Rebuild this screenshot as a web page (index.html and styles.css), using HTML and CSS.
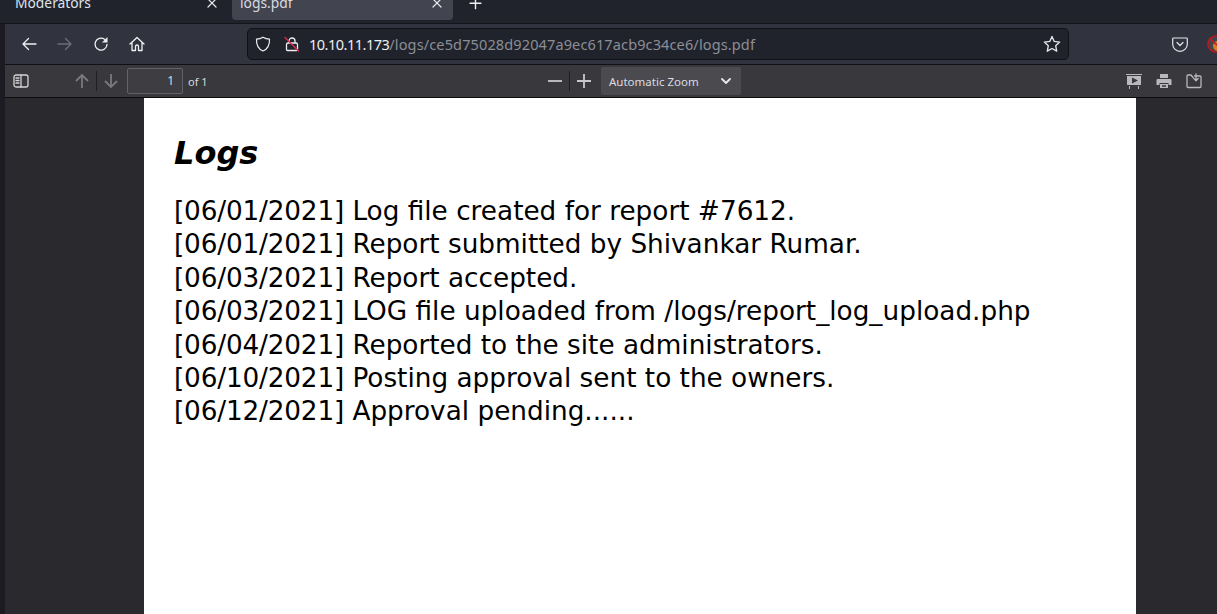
FILE: index.html
```html
<!DOCTYPE html>
<html lang="en">
<head>
<meta charset="utf-8">
<title>logs.pdf</title>
<link rel="stylesheet" href="styles.css">
</head>
<body>
<div class="window">
  <div class="tabbar">
    <div class="tab">
      <span class="tab-title">Moderators</span>
      <svg class="tab-close" viewBox="0 0 10 10"><path d="M1 -1L9 7M9 -1L1 7"/></svg>
    </div>
    <div class="tab active">
      <span class="tab-title">logs.pdf</span>
      <svg class="tab-close" viewBox="0 0 10 10"><path d="M1 -1L9 7M9 -1L1 7"/></svg>
    </div>
    <svg class="newtab" viewBox="0 0 12 12"><path d="M6 -2V8M1 3H11"/></svg>
  </div>
  <div class="navbar">
    <div class="navbtns">
      <svg class="ic" viewBox="0 0 16 16"><path d="M15 8H2M7.500 2.500L2 8l5.500 5.500"/></svg>
      <svg class="ic dim" viewBox="0 0 16 16"><path d="M1 8h13M8.500 2.500L14 8l-5.500 5.500"/></svg>
      <svg class="ic" viewBox="0 0 16 16"><path d="M14 8.500A6 6 0 1 1 11.500 3.300"/><path class="fill" d="M14.500 1v5.500H9z"/></svg>
      <svg class="ic" viewBox="0 0 16 16"><path d="M1 8L8 1.500 15 8M3 6.500V14.500H6.500V10.500a1.500 1.500 0 0 1 3 0V14.500H13V6.500"/></svg>
    </div>
    <div class="urlbar">
      <svg class="shield" viewBox="0 0 16 16"><path d="M8 1.200C10 2.400 12 3 14.500 3.200C14.800 9 12.500 13 8 15C3.500 13 1.200 9 1.500 3.200C4 3 6 2.400 8 1.200Z"/></svg>
      <svg class="lock" viewBox="0 0 16 16"><path d="M5 7V5a3 3 0 0 1 6 0v2M2.500 8.500a1.500 1.500 0 0 1 1.500-1.500h8a1.500 1.500 0 0 1 1.500 1.500v5a1 1 0 0 1-1 1h-9a1 1 0 0 1-1-1z"/><path class="strike" d="M1 1.500L14.500 15"/></svg>
      <div class="url"><span class="host">10.10.11.173</span><span class="path">/logs/ce5d75028d92047a9ec617acb9c34ce6/logs.pdf</span></div>
      <svg class="star" viewBox="0 0 16 16"><path d="M8 1.300l2 4.400 4.800.6-3.500 3.300.9 4.800L8 12l-4.200 2.400.9-4.800L1.200 6.300 6 5.700z"/></svg>
    </div>
    <div class="navright">
      <svg class="pocket" viewBox="0 0 16 16"><path d="M1.500 2h13a.8.8 0 0 1 .8.8V8a7.300 7.300 0 0 1-14.600 0V2.800a.8.8 0 0 1 .8-.8zM5 6.500L8 9.500l3-3"/></svg>
      <svg class="ext" viewBox="0 0 18 18"><circle cx="9" cy="9" r="8" class="ext-ring"/><circle cx="11" cy="11" r="5" class="ext-core"/><path class="ext-slash" d="M3 3.500L15 14.500"/></svg>
    </div>
  </div>
  <div class="pdfbar">
    <div class="pdf-left">
      <svg class="tool sidebar" viewBox="0 0 16 16"><rect x="1" y="2" width="14" height="12" rx="2"/><path d="M8 2v12M3 5h3M3 7.500h3M3 10h3"/></svg>
      <div class="pager">
        <svg class="tool dim2" viewBox="0 0 16 16"><path class="thick" d="M8 15V2M2 8l6-6 6 6"/></svg>
        <span class="sep"></span>
        <svg class="tool dim2" viewBox="0 0 16 16"><path class="thick" d="M8 1v13M2 8l6 6 6-6"/></svg>
      </div>
      <div class="pageinput">1</div>
      <span class="pagecount">of 1</span>
    </div>
    <div class="pdf-mid">
      <svg class="tool zoombtn" viewBox="0 0 16 16"><path class="thick" d="M1 8h14"/></svg>
      <span class="sep"></span>
      <svg class="tool zoombtn" viewBox="0 0 16 16"><path class="thick" d="M1 8h14M8 1v14"/></svg>
      <div class="zoomselect">
        <span>Automatic Zoom</span>
        <svg class="chev" viewBox="0 0 10 8"><path d="M1 2l4 4 4-4"/></svg>
      </div>
    </div>
    <div class="pdf-right">
      <svg class="tool solid" viewBox="0 0 16 16"><path d="M0 1h16v1H0zM1 3h14v9H1zM3 13h1v3H3zM12 13h1v3h-1z"/><path class="cut" d="M6 4.500L12 7.500 6 10.500z"/></svg>
      <svg class="tool solid" viewBox="0 0 16 16"><path d="M4 1h8v4H4zM1.500 6h13a1 1 0 0 1 1 1v5h-3v-2h-9v2h-3V7a1 1 0 0 1 1-1zM4 11h8v4H4z"/><path class="cut" d="M6 12h4v.8H6zM6 13.300h4v.8H6z"/></svg>
      <svg class="tool save" viewBox="0 0 16 16"><path d="M8.500 3H14a1 1 0 0 1 1 1v9.500a1 1 0 0 1-1 1H2a1 1 0 0 1-1-1V3a1 1 0 0 1 1-1h3l2 2.500M10 1v6.500M7.800 5.500L10 7.700l2.200-2.200"/></svg>
    </div>
  </div>
  <main class="viewer">
    <article class="page">
      <h1 class="doc-title">Logs</h1>
      <p class="log"><span class="stamp">[06/01/2021]</span> Log file created for report #7612.</p>
      <p class="log"><span class="stamp">[06/01/2021]</span> Report submitted by Shivankar Rumar.</p>
      <p class="log"><span class="stamp">[06/03/2021]</span> Report accepted.</p>
      <p class="log"><span class="stamp">[06/03/2021]</span> LOG file uploaded from /logs/report_log_upload.php</p>
      <p class="log"><span class="stamp">[06/04/2021]</span> Reported to the site administrators.</p>
      <p class="log"><span class="stamp">[06/10/2021]</span> Posting approval sent to the owners.</p>
      <p class="log"><span class="stamp">[06/12/2021]</span> Approval pending......</p>
    </article>
  </main>
</div>
</body>
</html>
```
FILE: styles.css
```css
* { box-sizing: border-box; }
html, body { margin: 0; height: 100%; overflow: hidden; }
body { background: #1c1b22; font-family: "Noto Sans", sans-serif; }
.window { width: 1217px; height: 614px; display: flex; flex-direction: column; padding-left: 5px; background: #1c1b22; }
svg { display: block; flex: none; fill: none; stroke-linecap: round; stroke-linejoin: round; }

.tabbar { height: 24px; flex: none; display: flex; align-items: flex-end; overflow: hidden; background: #21232c; margin-left: -5px; padding-left: 5px; border-bottom: 1px solid #15161b; }
.tab { width: 226px; height: 40px; flex: none; display: flex; align-items: center; justify-content: space-between; padding: 0 14px 0 10px; margin-bottom: 3px; margin-right: 1px; border-radius: 4px; color: #dfe4ea; font-size: 13.800px; }
.tab-title { position: relative; top: 2px; }
.tab.active { width: 221px; background: #42454f; color: #d8dbe1; padding: 0 11px 0 8px; }
.tab-close { width: 10px; height: 10px; stroke: #e8e8ee; stroke-width: 1.200; position: relative; top: 5px; }
.newtab { width: 13px; height: 13px; margin: 0 0 10px 15px; stroke: #f0f0f4; stroke-width: 1.300; overflow: visible; }

.navbar { height: 41px; flex: none; display: flex; align-items: center; background: #31343e; border-bottom: 1px solid #101116; }
.navbtns { display: flex; align-items: center; gap: 20px; padding-left: 16px; width: 242px; }
.ic { width: 16px; height: 16px; stroke: #f0f0f4; stroke-width: 1.300; }
.ic .fill { fill: #f0f0f4; stroke: none; }
.ic.dim { stroke: #6b6e76; }
.urlbar { width: 822px; height: 32px; flex: none; display: flex; align-items: center; background: #21232c; border: 1px solid #101116; border-radius: 5px; padding: 0 7px; }
.shield { width: 16px; height: 16px; stroke: #ecedf1; stroke-width: 1.200; }
.lock { width: 16px; height: 16px; margin-left: 13px; stroke: #ecedf1; stroke-width: 1.300; }
.lock .strike { stroke: #e22850; stroke-width: 1.300; }
.url { flex: 1; margin-left: 9px; font-size: 14.500px; color: #8b8e96; white-space: nowrap; }
.host { color: #eef0f4; letter-spacing: -0.500px; }
.path { letter-spacing: 0.130px; }
.star { width: 18px; height: 18px; stroke: #e4e5ea; stroke-width: 1.200; }
.navright { flex: 1; display: flex; align-items: center; padding-left: 103px; gap: 19px; overflow: hidden; }
.pocket { width: 16px; height: 16px; stroke: #e4e5ea; stroke-width: 1.200; }
.ext { width: 18px; height: 18px; }
.ext-ring { fill: #40444f; stroke: #b51a20; stroke-width: 1.600; }
.ext-core { fill: #d97b1e; }
.ext-slash { stroke: #c01a22; stroke-width: 1.500; }

.pdfbar { height: 33px; flex: none; display: flex; align-items: center; background: #38383d; border-bottom: 1px solid #0c0c0d; }
.pdf-left { display: flex; align-items: center; width: 542px; flex: none; }
.tool { width: 16px; height: 16px; stroke: #b1b1b3; stroke-width: 1.300; }
.sidebar { margin-left: 8px; stroke: #d4d4d6; }
.pager { display: flex; align-items: center; gap: 6px; margin-left: 45px; }
.thick { stroke-width: 1.800; stroke-linecap: butt; stroke-linejoin: miter; }
.dim2 { stroke: #787a7e; }
.sep { width: 1px; height: 20px; background: #1f1f22; flex: none; }
.pageinput { width: 56px; height: 26px; margin-left: 8px; border: 1px solid #636367; border-radius: 2px; background: #3e3e42; color: #d8d8dc; font-size: 12px; line-height: 24px; text-align: right; padding-right: 8px; }
.pagecount { margin-left: 5px; font-size: 11px; color: #d8d8dc; }
.pdf-mid { display: flex; align-items: center; gap: 6px; }
.zoombtn { stroke: #c8c8cb; }
.zoomselect { width: 140px; height: 28px; margin-left: 3px; background: #4a4a4f; border-radius: 2px; display: flex; align-items: center; justify-content: space-between; padding: 0 10px 0 8px; font-size: 11.500px; color: #dcdce0; }
.chev { width: 10px; height: 8px; stroke: #e8e8ec; stroke-width: 1.800; }
.pdf-right { display: flex; align-items: center; gap: 14px; padding-right: 15px; margin-left: auto; }
.solid { fill: #b9b9bb; stroke: none; }
.solid .cut { fill: #38383d; }
.save { stroke: #b9b9bb; stroke-width: 1.300; }

.viewer { flex: 1; min-height: 0; overflow: hidden; background: #2a2a2e; padding-left: 139px; }
.page { width: 992px; height: 600px; background: #fff; color: #000; font-family: "DejaVu Sans", sans-serif; padding: 37px 30px 0; }
.doc-title { margin: 0 0 24px; font-size: 32px; line-height: 36px; font-weight: bold; font-style: italic; }
.log { margin: 0; font-size: 26.300px; line-height: 33.400px; white-space: nowrap; }
.stamp { letter-spacing: -0.170px; }
```
